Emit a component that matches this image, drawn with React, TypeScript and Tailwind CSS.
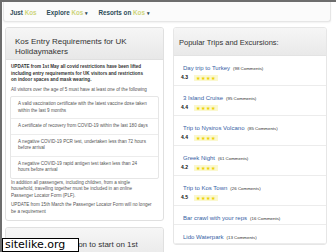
import React from "react";

const trips = [
  { name: "Day trip to Turkey", comments: 98, rating: "4.3" },
  { name: "3 Island Cruise", comments: 95, rating: "4.4" },
  { name: "Trip to Nysiros Volcano", comments: 85, rating: "4.4" },
  { name: "Greek Night", comments: 61, rating: "4.2" },
  { name: "Trip to Kos Town", comments: 26, rating: "4.5" },
  { name: "Bar crawl with your reps", comments: 16 },
  { name: "Lido Waterpark", comments: 13 },
];

const requirements = [
  ["A valid vaccination certificate with the latest vaccine dose taken", "within the last 9 months"],
  ["A certificate of recovery from COVID-19 within the last 180 days"],
  ["A negative COVID-19 PCR test, undertaken less than 72 hours", "before arrival"],
  ["A negative COVID-19 rapid antigen test taken less than 24", "hours before arrival"],
];

const NavItem: React.FC<{ label: string; caret?: boolean }> = ({ label, caret }) => (
  <span className="whitespace-nowrap">
    {label} <span className="text-[#cdd47a]">Kos</span>
    {caret && <span className="ml-[2px] text-[5px]">▾</span>}
  </span>
);

export default function App() {
  return (
    <div
      className="relative w-[336px] h-[252px] overflow-hidden bg-white border-l-2 border-t-2 border-[#6d6d6d]"
      style={{ fontFamily: '"Liberation Sans", Arial, sans-serif' }}
    >
      <nav className="mx-[1px] h-[20px] flex items-center gap-[10px] pl-[6px] pt-[2px] mr-[5px] bg-[#fbfbfb] border border-t-0 border-[#e6e6e6] rounded-b-[3px] shadow-[0_1px_2px_rgba(0,0,0,0.06)] text-[6.3px] font-bold text-[#2d4b57]">
        <NavItem label="Just" />
        <NavItem label="Explore" caret />
        <NavItem label="Resorts on" caret />
      </nav>

      <div className="flex gap-[9px] pl-[3px] pt-[5px]">
        <div className="w-[159px] flex flex-col gap-[6px]">
          <section className="border border-[#e0e0e0] rounded-[3px] overflow-hidden">
            <div className="h-[32px] bg-gradient-to-b from-[#f6f6f6] to-[#e8e8e8] border-b border-[#e0e0e0] px-[9px] pt-[9px] text-[8px] leading-[10px] text-[#333]">
              Kos Entry Requirements for UK
              <br />
              Holidaymakers
            </div>
            <div className="px-[5px] pt-[4px] pb-[5px] text-[4.6px] leading-[6.5px] text-[#555]">
              <p className="font-bold text-[#333]">
                UPDATE from 1st May all covid restrictions have been lifted
                <br />
                including entry requirements for UK visitors and restrictions
                <br />
                on indoor spaces and mask wearing.
              </p>
              <p className="mt-[3px] whitespace-nowrap">
                All visitors over the age of 5 must have at least one of the following
              </p>
              <ul className="mt-[3px] -mx-[1px] border border-[#e6e6e6] rounded-[2px]">
                {requirements.map((lines, i) => (
                  <li
                    key={i}
                    className="px-[7px] py-[4px] border-b border-[#ececec] last:border-b-0"
                  >
                    {lines.map((l, j) => (
                      <div key={j} className="whitespace-nowrap">
                        {l}
                      </div>
                    ))}
                  </li>
                ))}
              </ul>
              <p className="mt-[1px]">
                In addition all passengers, including children, from a single
                <br />
                household, travelling together must be included in an online
                <br />
                Passenger Locator Form (PLF).
              </p>
              <p className="mt-[3px]">
                UPDATE from 15th March the Passenger Locator Form will no longer
                <br />
                be a requirement
              </p>
            </div>
          </section>
          <section className="border border-[#e0e0e0] rounded-[3px] overflow-hidden">
            <div className="h-[32px] bg-gradient-to-b from-[#f6f6f6] to-[#e8e8e8] px-[9px] pt-[12px] text-[8px] leading-[10px] text-[#333] whitespace-nowrap">
              Kos Holiday Season to start on 1st
            </div>
          </section>
        </div>

        <section className="w-[154px] self-start border border-[#e6e6e6] rounded-[3px] overflow-hidden">
          <div className="h-[28px] bg-gradient-to-b from-[#f6f6f6] to-[#e9e9e9] border-b border-[#e3e3e3] px-[5px] pt-[10px] text-[7.5px] leading-[9px] text-[#333] whitespace-nowrap">
            Popular Trips and Excursions:
          </div>
          <ul>
            {trips.map((t) => (
              <li
                key={t.name}
                className={`px-[9px] pt-[5px] border-b border-[#ececec] whitespace-nowrap ${
                  t.rating ? "pb-[4px]" : "pb-[5px]"
                }`}
              >
                <div className="h-[8px] leading-[8px]">
                  <span className="text-[6px] text-[#3561a4]">{t.name}</span>
                  <span className="ml-[3px] text-[4.4px] text-[#333]">
                    ({t.comments} Comments)
                  </span>
                </div>
                {t.rating && (
                  <div className="mt-[5px] -ml-[2px] flex items-center h-[7px]">
                    <span className="text-[5px] font-bold text-[#111]">{t.rating}</span>
                    <span className="ml-[6px] px-[2px] bg-[#fbf8cf] text-[5px] leading-[6px] tracking-[1px] text-[#edd200]">
                      ★★★★
                    </span>
                  </div>
                )}
              </li>
            ))}
          </ul>
        </section>
      </div>

      <div
        className="absolute left-0 bottom-0 w-[77px] h-[14px] bg-white border border-black flex items-center pl-[2px] text-[11px] leading-[12px] text-black"
        style={{ fontFamily: '"DejaVu Sans", sans-serif' }}
      >
        sitelike.org
      </div>
    </div>
  );
}
